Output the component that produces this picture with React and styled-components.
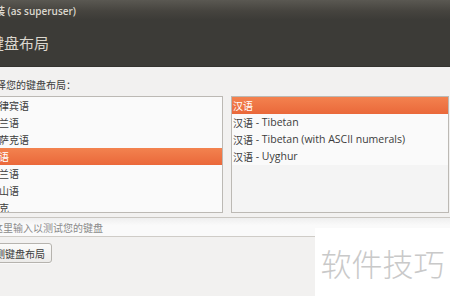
import React from "react";
import styled, { createGlobalStyle } from "styled-components";

const Global = createGlobalStyle`
  html, body { margin: 0; padding: 0; background: #f2f1f0; }
  body { font-family: "Open Sans", "Noto Sans CJK SC", sans-serif; }
`;

const Page = styled.div`
  position: relative;
  width: 450px;
  height: 296px;
  overflow: hidden;
  background: #f2f1f0;
`;

const TitleBar = styled.div`
  height: 20px;
  display: flex;
  align-items: center;
  margin-left: -15px;
  background: linear-gradient(#5a5852 0%, #46443f 55%, #3c3b37 100%);
  color: #dcd8cf;
  font-size: 10px;
  font-weight: 600;
  font-family: "Open Sans", "Noto Sans CJK SC", sans-serif;
  white-space: nowrap;
`;

const Header = styled.div`
  height: 47px;
  box-sizing: border-box;
  padding-top: 15px;
  margin-left: -11px;
  background: #3c3b37;
  border-bottom: 1px solid #34332f;
  color: #dbd7ce;
  font-size: 15px;
  line-height: 15px;
  font-family: "Noto Sans CJK SC", sans-serif;
  white-space: nowrap;
`;

const Content = styled.div`
  margin-left: -22px;
  width: 472px;
  padding-top: 12px;
  display: flex;
  flex-direction: column;
`;

const Label = styled.div`
  padding-left: 8px;
  height: 12px;
  line-height: 12px;
  font-size: 10px;
  color: #3c3c3c;
  font-family: "Noto Sans CJK SC", sans-serif;
  white-space: nowrap;
`;

const Lists = styled.div`
  margin-top: 5px;
  padding-left: 7px;
  padding-right: 1px;
  display: grid;
  grid-template-columns: 238px 218px;
  column-gap: 8px;
`;

const List = styled.div`
  height: 117px;
  box-sizing: border-box;
  border: 1px solid #bcb9b4;
  background: #f4f4f4;
  overflow: hidden;
`;

const Row = styled.div`
  height: 17px;
  line-height: 17px;
  padding-left: ${(p) => p.$pad}px;
  font-size: 11px;
  color: ${(p) => (p.$sel ? "#ffffff" : "#3c3c3c")};
  background: ${(p) =>
    p.$sel ? "linear-gradient(#f3824f, #ea683a)" : "#fafafa"};
  white-space: nowrap;
  display: flex;
  align-items: center;
`;

const Cjk = styled.span`
  font-family: "Noto Sans CJK SC", sans-serif;
  font-size: 10px;
`;

const Latin = styled.span`
  font-family: "Open Sans", sans-serif;
  font-size: 10.5px;
  white-space: pre;
`;

const Entry = styled.div`
  margin-top: 4px;
  height: 20px;
  box-sizing: border-box;
  border-top: 1px solid #c9c6c1;
  border-bottom: 1px solid #cfccc7;
  background: linear-gradient(#efefef, #fafafa 40%, #fafafa);
  padding-left: 5px;
  display: flex;
  align-items: center;
  font-size: 10px;
  color: #8b8b8b;
  font-family: "Noto Sans CJK SC", sans-serif;
  white-space: nowrap;
`;

const ButtonRow = styled.div`
  margin-top: 6px;
  display: flex;
`;

const Button = styled.div`
  height: 20px;
  box-sizing: border-box;
  padding: 0 6px;
  border: 1px solid #b6b3ae;
  border-radius: 3px;
  background: linear-gradient(#fbfbfa, #ecebe9);
  box-shadow: 0 1px 0 rgba(255, 255, 255, 0.6);
  display: flex;
  align-items: center;
  font-size: 10px;
  color: #3c3c3c;
  font-family: "Noto Sans CJK SC", sans-serif;
  white-space: nowrap;
`;

const Watermark = styled.div`
  position: absolute;
  right: 0;
  bottom: 0;
  width: 135px;
  height: 68px;
  background: #ffffff;
  display: flex;
  align-items: center;
  justify-content: center;
  color: #c9c9c9;
  font-size: 31px;
  font-weight: 300;
  font-family: "Noto Sans CJK SC", sans-serif;
`;

const leftItems = ["菲律宾语", "芬兰语", "哈萨克语", "汉语", "荷兰语", "黑山语", "捷克"];
const rightItems = [
  ["汉语", ""],
  ["汉语", " - Tibetan"],
  ["汉语", " - Tibetan (with ASCII numerals)"],
  ["汉语", " - Uyghur"],
];

export default function App() {
  return (
    <Page>
      <Global />
      <TitleBar>安装 (as superuser)</TitleBar>
      <Header>键盘布局</Header>
      <Content>
        <Label>选择您的键盘布局：</Label>
        <Lists>
          <List>
            {leftItems.map((t) => (
              <Row key={t} $pad={3} $sel={t === "汉语"}>
                <Cjk>{t}</Cjk>
              </Row>
            ))}
          </List>
          <List>
            {rightItems.map(([c, l], i) => (
              <Row key={i} $pad={1} $sel={i === 0}>
                <Cjk>{c}</Cjk>
                {l && <Latin>{l}</Latin>}
              </Row>
            ))}
          </List>
        </Lists>
        <Entry>在这里输入以测试您的键盘</Entry>
        <ButtonRow>
          <Button>检测键盘布局</Button>
        </ButtonRow>
      </Content>
      <Watermark>软件技巧</Watermark>
    </Page>
  );
}
